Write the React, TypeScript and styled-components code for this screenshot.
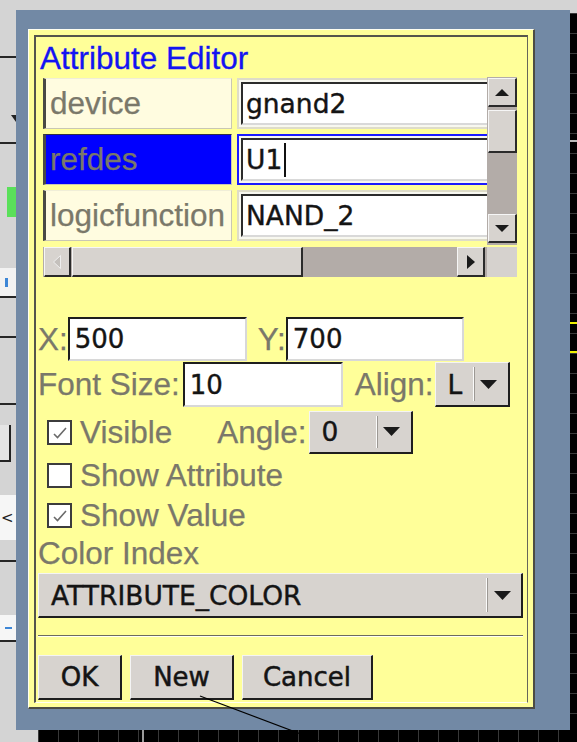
import React from "react";
import styled, { createGlobalStyle } from "styled-components";

const labelFont = `"Liberation Sans", Arial, sans-serif`;
const entryFont = `"DejaVu Sans", Verdana, sans-serif`;

const GlobalStyle = createGlobalStyle`
  html, body {
    margin: 0;
    padding: 0;
  }
  body {
    background: #d4d4d4;
    overflow: hidden;
  }
`;

const Desktop = styled.div`
  position: relative;
  width: 577px;
  height: 742px;
  display: grid;
  grid-template-columns: 16px 554px 7px;
  grid-template-rows: 10px 720px 12px;
  background: #d4d4d4;
  overflow: hidden;
  font-family: ${labelFont};
`;

/* strip of the app window lying behind the dialog */
const BackStrip = styled.div`
  grid-column: 1;
  grid-row: 2;
  display: flex;
  flex-direction: column;
`;

const StripSeg = styled.div<{ $h?: number; $bg?: string; $line?: boolean; $align?: string }>`
  box-sizing: border-box;
  flex: ${(p) => (p.$h ? `0 0 ${p.$h}px` : "1")};
  background: ${(p) => p.$bg ?? "transparent"};
  border-bottom: ${(p) => (p.$line ? "2px solid #262626" : "none")};
  display: flex;
  align-items: ${(p) => p.$align ?? "center"};
  overflow: hidden;
`;

const GreenTag = styled.div`
  margin-left: 7px;
  width: 9px;
  height: 100%;
  background: #5ae05a;
`;

const BlueMark = styled.div<{ $w: number; $h: number }>`
  margin-left: 5px;
  width: ${(p) => p.$w}px;
  height: ${(p) => p.$h}px;
  background: #3d86d6;
`;

const SmallBox = styled.div`
  box-sizing: border-box;
  width: 11px;
  height: 100%;
  background: #e4e4e4;
  border-right: 2px solid #222;
  border-bottom: 2px solid #222;
`;

const StripGlyph = styled.span`
  margin-left: 1px;
  font: 15px ${entryFont};
  color: #222;
`;

const StripArrow = styled.svg`
  margin: 15px 0 0 11px;
`;

/* black drawing canvas peeking out on the right and bottom */
const CanvasRight = styled.div`
  grid-column: 3;
  grid-row: 1 / 4;
  margin-top: 13px;
  background:
    linear-gradient(to bottom,
      transparent 0 127px, #b8b8b8 127px 129px, transparent 129px 309px,
      #f0f000 309px 311px, transparent 311px 338px,
      #f0f000 338px 340px, transparent 340px),
    repeating-linear-gradient(to bottom, #3a3a3a 0 1px, transparent 1px 20px),
    #000;
`;

const CanvasBottom = styled.div`
  grid-column: 1 / 4;
  grid-row: 3;
  margin-left: 38px;
  background:
    linear-gradient(to right, transparent 0 104px, #9a9a9a 104px 106px, transparent 106px),
    repeating-linear-gradient(to right, #383838 0 1px, transparent 1px 20px),
    #000;
`;

const WindowFrame = styled.div`
  grid-column: 2;
  grid-row: 2;
  display: flex;
  background: #7289a5;
  padding: 19px 35px 21px 12px;
`;

const Dialog = styled.div`
  flex: 1;
  display: flex;
  box-sizing: border-box;
  background: #ffff99;
  border-top: 1px solid #fffff2;
  border-left: 1px solid #fffff2;
  border-right: 2px solid #4c4c44;
  border-bottom: 2px solid #4c4c44;
  padding: 5px 5px 4px 5px;
`;

const InnerFrame = styled.div`
  flex: 1;
  display: flex;
  flex-direction: column;
  border-top: 2px solid #55554c;
  border-left: 2px solid #55554c;
  border-right: 1px solid #66665a;
  border-bottom: 1px solid #fffff2;
  padding: 2px 0 0 2px;
`;

const Title = styled.div`
  flex-shrink: 0;
  margin: 1px 0 0 2px;
  height: 37px;
  line-height: 37px;
  font: 31.5px ${labelFont};
  color: #1414f2;
  -webkit-text-stroke: 0.3px #1414f2;
`;

const Table = styled.div`
  flex-shrink: 0;
  margin-left: 5px;
  width: 474px;
  display: grid;
  grid-template-columns: 444px 30px;
  grid-template-rows: 168px 32px;
`;

const Cells = styled.div`
  overflow: hidden;
  padding-top: 1px;
  display: flex;
  flex-direction: column;
  gap: 5px;
`;

const Row = styled.div`
  display: flex;
  gap: 5px;
  height: 51px;
  flex-shrink: 0;
`;

const NameCell = styled.div<{ $selected?: boolean }>`
  box-sizing: border-box;
  width: 189px;
  flex-shrink: 0;
  background: ${(p) => (p.$selected ? "#0000ff" : "#fffce0")};
  border-left: 3px solid #4a4a44;
  border-top: 1px solid ${(p) => (p.$selected ? "#303048" : "#f0eed8")};
  border-right: 1px solid #c9c7b4;
  border-bottom: 1px solid #c9c7b4;
  padding-left: 4px;
  display: flex;
  align-items: center;
  font: 31.5px ${labelFont};
  color: #7a786a;
  -webkit-text-stroke: 0.25px #7a786a;
  white-space: nowrap;
`;

const ValueCell = styled.div<{ $focused?: boolean }>`
  box-sizing: border-box;
  width: 320px;
  flex-shrink: 0;
  display: flex;
  padding: 2px;
  background: #f8f8f0;
  border: 2px solid ${(p) => (p.$focused ? "#1c1cff" : "#dedcc8")};
`;

const CellEntry = styled.div`
  flex: 1;
  box-sizing: border-box;
  background: #fff;
  border-top: 2px solid #2c2c2c;
  border-left: 2px solid #2c2c2c;
  border-bottom: 2px solid #d9d9d9;
  border-right: 2px solid #d9d9d9;
  padding-left: 3px;
  display: flex;
  align-items: center;
  font: 26.5px ${entryFont};
  color: #141414;
  -webkit-text-stroke: 0.4px #141414;
  white-space: nowrap;
`;

const Caret = styled.span`
  width: 2px;
  height: 34px;
  margin-left: 2px;
  background: #111;
`;

const VScroll = styled.div`
  background: #b3aca8;
  display: flex;
  flex-direction: column;
  padding: 1px 0 2px 1px;
`;

const HScroll = styled.div`
  margin-top: 2px;
  background: #b3aca8;
  display: flex;
  padding: 0 2px 0 1px;
`;

const Corner = styled.div`
  margin-top: 2px;
  background: #d6d2ce;
`;

const ScrollPart = styled.div<{ $len?: number; $gap?: number }>`
  box-sizing: border-box;
  flex: ${(p) => (p.$len ? `0 0 ${p.$len}px` : "1")};
  margin: ${(p) => (p.$gap ? `${p.$gap}px 0 0 0` : "0")};
  background: #d7d3cf;
  border-top: 1px solid #f6f6f6;
  border-left: 1px solid #f6f6f6;
  border-right: 2px solid #2a2a2a;
  border-bottom: 2px solid #2a2a2a;
  display: flex;
  align-items: center;
  justify-content: center;
`;

const HThumb = styled(ScrollPart)`
  margin: 0 0 0 1px;
`;

const Spacer = styled.div`
  flex: 1;
`;

const FormRow = styled.div<{ $h: number; $mt?: number }>`
  flex-shrink: 0;
  display: flex;
  align-items: center;
  height: ${(p) => p.$h}px;
  margin-top: ${(p) => p.$mt ?? 0}px;
`;

const Label = styled.span<{ $ml?: number }>`
  margin-left: ${(p) => p.$ml ?? 0}px;
  font: 31.5px ${labelFont};
  color: #7a786a;
  -webkit-text-stroke: 0.25px #7a786a;
  white-space: nowrap;
`;

const BlockLabel = styled.div`
  flex-shrink: 0;
  height: 37px;
  line-height: 37px;
  font: 31.5px ${labelFont};
  color: #7a786a;
  -webkit-text-stroke: 0.25px #7a786a;
`;

const Entry = styled.div<{ $w: number; $ml?: number }>`
  box-sizing: border-box;
  width: ${(p) => p.$w}px;
  height: 100%;
  margin-left: ${(p) => p.$ml ?? 0}px;
  background: #fff;
  border-top: 2px solid #1e1e1e;
  border-left: 2px solid #1e1e1e;
  border-bottom: 2px solid #d8d8d8;
  border-right: 2px solid #d8d8d8;
  padding-left: 5px;
  display: flex;
  align-items: center;
  font: 26px ${entryFont};
  color: #141414;
  -webkit-text-stroke: 0.4px #141414;
`;

const CheckBox = styled.div`
  box-sizing: border-box;
  width: 25px;
  height: 25px;
  margin-left: 9px;
  background: #fff;
  border: 2px solid #3c3c3c;
  display: flex;
  align-items: center;
  justify-content: center;
`;

const MenuButton = styled.div<{ $w: number; $h: number; $ml?: number }>`
  box-sizing: border-box;
  flex-shrink: 0;
  width: ${(p) => p.$w}px;
  height: ${(p) => p.$h}px;
  margin-left: ${(p) => p.$ml ?? 0}px;
  display: flex;
  align-items: stretch;
  background: #d7d3cf;
  border-top: 1px solid #f4f4f4;
  border-left: 1px solid #f4f4f4;
  border-right: 2px solid #1e1e1e;
  border-bottom: 2px solid #1e1e1e;
  font: 26.5px ${entryFont};
  color: #141414;
  -webkit-text-stroke: 0.4px #141414;
`;

const MenuText = styled.span`
  flex: 1;
  display: flex;
  align-items: center;
  padding-left: 12px;
  white-space: nowrap;
  overflow: hidden;
`;

const MenuDivider = styled.span`
  width: 0;
  margin: 4px 0;
  border-left: 1px solid #fbfbfb;
  border-right: 1px solid #9c9894;
`;

const MenuArrow = styled.span`
  width: 33px;
  padding-right: 5px;
  box-sizing: border-box;
  display: flex;
  align-items: center;
  justify-content: center;
`;

const Separator = styled.div`
  flex-shrink: 0;
  width: 485px;
  margin-top: 17px;
  border-top: 1px solid #6d6b5e;
  border-bottom: 1px solid #fffff4;
`;

const ButtonBar = styled.div`
  flex-shrink: 0;
  display: flex;
  gap: 8px;
  height: 45px;
  margin-top: 18px;
`;

const PushButton = styled.div<{ $w: number }>`
  box-sizing: border-box;
  width: ${(p) => p.$w}px;
  display: flex;
  align-items: center;
  justify-content: center;
  background: #d7d3cf;
  border-top: 1px solid #f4f4f4;
  border-left: 1px solid #f4f4f4;
  border-right: 2px solid #1e1e1e;
  border-bottom: 2px solid #1e1e1e;
  font: 26px ${entryFont};
  color: #141414;
  -webkit-text-stroke: 0.5px #141414;
`;

const WireOverlay = styled.svg`
  position: absolute;
  left: 0;
  top: 0;
  pointer-events: none;
`;

const DownTri = () => (
  <svg width="17" height="9" viewBox="0 0 17 9">
    <polygon points="0,0 17,0 8.5,9" fill="#1a1a1a" />
  </svg>
);

const Check = () => (
  <svg width="21" height="21" viewBox="0 0 21 21">
    <polyline points="5,12 8.5,15.5 17,6" fill="none" stroke="#6a6a6a" strokeWidth="1.6" />
  </svg>
);

const Menu = ({ w, h, ml, text }: { w: number; h: number; ml?: number; text: string }) => (
  <MenuButton $w={w} $h={h} $ml={ml}>
    <MenuText>{text}</MenuText>
    <MenuDivider />
    <MenuArrow>
      <DownTri />
    </MenuArrow>
  </MenuButton>
);

const attributes = [
  { name: "device", value: "gnand2" },
  { name: "refdes", value: "U1", selected: true },
  { name: "logicfunction", value: "NAND_2" },
];

export default function App() {
  return (
    <>
      <GlobalStyle />
      <Desktop>
        <BackStrip>
          <StripSeg $h={48} $line />
          <StripSeg $h={42} />
          <StripSeg $h={44} $line $align="flex-start">
            <StripArrow width="5" height="7" viewBox="0 0 5 7">
              <polygon points="0,0 5,0 5,7" fill="#222" />
            </StripArrow>
          </StripSeg>
          <StripSeg $h={43} />
          <StripSeg $h={30}>
            <GreenTag />
          </StripSeg>
          <StripSeg $h={51} />
          <StripSeg $h={30} $bg="#f2f2f2" $line>
            <BlueMark $w={3} $h={9} />
          </StripSeg>
          <StripSeg $h={40} $line />
          <StripSeg $h={67} $line />
          <StripSeg $h={20} />
          <StripSeg $h={37}>
            <SmallBox />
          </StripSeg>
          <StripSeg $h={33} />
          <StripSeg $h={45} $bg="#f6f6f6">
            <StripGlyph>&lt;</StripGlyph>
          </StripSeg>
          <StripSeg $h={22} $line />
          <StripSeg $h={53} />
          <StripSeg $h={25} $bg="#f6f6f6">
            <BlueMark $w={7} $h={2} />
          </StripSeg>
          <StripSeg $h={2} $line />
          <StripSeg />
        </BackStrip>

        <WindowFrame>
          <Dialog>
            <InnerFrame>
              <Title>Attribute Editor</Title>

              <Table>
                <Cells>
                  {attributes.map((a) => (
                    <Row key={a.name}>
                      <NameCell $selected={a.selected}>{a.name}</NameCell>
                      <ValueCell $focused={a.selected}>
                        <CellEntry>
                          {a.value}
                          {a.selected && <Caret />}
                        </CellEntry>
                      </ValueCell>
                    </Row>
                  ))}
                </Cells>
                <VScroll>
                  <ScrollPart $len={29}>
                    <svg width="14" height="7" viewBox="0 0 14 7">
                      <polygon points="0,7 7,0 14,7" fill="#1a1a1a" />
                    </svg>
                  </ScrollPart>
                  <ScrollPart $len={43} $gap={3} />
                  <Spacer />
                  <ScrollPart $len={29}>
                    <svg width="14" height="7" viewBox="0 0 14 7">
                      <polygon points="0,0 14,0 7,7" fill="#1a1a1a" />
                    </svg>
                  </ScrollPart>
                </VScroll>
                <HScroll>
                  <ScrollPart $len={27}>
                    <svg width="8" height="14" viewBox="0 0 8 14">
                      <polygon points="7.5,0.5 0.5,7 7.5,13.5" fill="#c4c0bc" stroke="#eeeeee" strokeWidth="1" />
                    </svg>
                  </ScrollPart>
                  <HThumb $len={231} />
                  <Spacer />
                  <ScrollPart $len={28}>
                    <svg width="8" height="14" viewBox="0 0 8 14">
                      <polygon points="0,0 8,7 0,14" fill="#1a1a1a" />
                    </svg>
                  </ScrollPart>
                </HScroll>
                <Corner />
              </Table>

              <FormRow $h={44} $mt={40}>
                <Label>X:</Label>
                <Entry $w={179}>500</Entry>
                <Label $ml={11}>Y:</Label>
                <Entry $w={178}>700</Entry>
              </FormRow>

              <FormRow $h={45} $mt={1}>
                <Label>Font Size:</Label>
                <Entry $w={160} $ml={3}>10</Entry>
                <Label $ml={12}>Align:</Label>
                <Menu w={75} h={45} ml={1} text="L" />
              </FormRow>

              <FormRow $h={46} $mt={2}>
                <CheckBox>
                  <Check />
                </CheckBox>
                <Label $ml={8}>Visible</Label>
                <Label $ml={45}>Angle:</Label>
                <Menu w={104} h={43} ml={2} text="0" />
              </FormRow>

              <FormRow $h={40}>
                <CheckBox />
                <Label $ml={8}>Show Attribute</Label>
              </FormRow>

              <FormRow $h={40}>
                <CheckBox>
                  <Check />
                </CheckBox>
                <Label $ml={8}>Show Value</Label>
              </FormRow>

              <BlockLabel>Color Index</BlockLabel>
              <FormRow $h={45} $mt={1}>
                <Menu w={485} h={45} text="ATTRIBUTE_COLOR" />
              </FormRow>

              <Separator />

              <ButtonBar>
                <PushButton $w={84}>OK</PushButton>
                <PushButton $w={104}>New</PushButton>
                <PushButton $w={131}>Cancel</PushButton>
              </ButtonBar>
            </InnerFrame>
          </Dialog>
        </WindowFrame>

        <CanvasRight />
        <CanvasBottom />

        {/* net wire from the schematic canvas drawn over the dialog */}
        <WireOverlay width="577" height="742" viewBox="0 0 577 742">
          <line x1="200" y1="696" x2="322" y2="742" stroke="#000" strokeWidth="1.2" />
        </WireOverlay>
      </Desktop>
    </>
  );
}
